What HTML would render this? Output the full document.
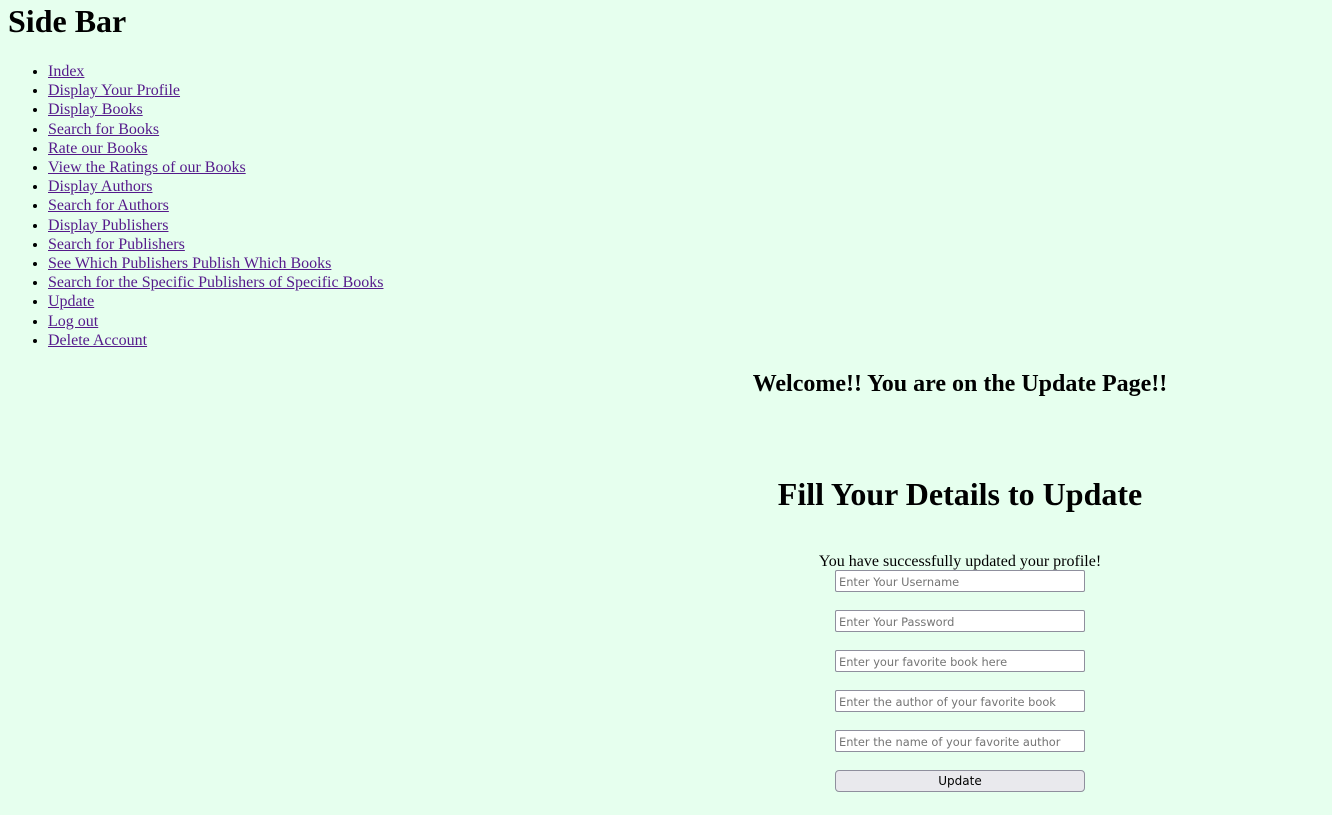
<!DOCTYPE html>
<html><head><style>
body{margin:0;background:#e6ffee;font-family:"Liberation Serif",serif;color:#000;width:1332px;height:815px;position:relative;overflow:hidden}
h1.sb{position:absolute;left:8px;top:3px;margin:0;font-size:32px;line-height:37px}
ul{position:absolute;left:8px;top:62px;margin:0;padding-left:40px;font-size:16px;line-height:19.2px}
a{color:#551a8b}
.c{position:absolute;left:660px;width:600px;text-align:center;margin:0}
.in{position:absolute;left:835px;width:250px;height:22px;box-sizing:border-box;border:1px solid #8f8f9d;border-radius:2px;background:#fff;font-family:"DejaVu Sans",sans-serif;font-size:11.4px;color:#757575;padding:3px 3px 1px;line-height:16px}
.btn{position:absolute;left:835px;top:770px;width:250px;height:22px;box-sizing:border-box;border:1px solid #8f8f9d;border-radius:4px;background:#e9e9ed;font-family:"DejaVu Sans",sans-serif;font-size:12px;text-align:center;line-height:21px}
</style></head><body>
<h1 class="sb">Side Bar</h1>
<ul>
<li><a href="#">Index</a></li>
<li><a href="#">Display Your Profile</a></li>
<li><a href="#">Display Books</a></li>
<li><a href="#">Search for Books</a></li>
<li><a href="#">Rate our Books</a></li>
<li><a href="#">View the Ratings of our Books</a></li>
<li><a href="#">Display Authors</a></li>
<li><a href="#">Search for Authors</a></li>
<li><a href="#">Display Publishers</a></li>
<li><a href="#">Search for Publishers</a></li>
<li><a href="#">See Which Publishers Publish Which Books</a></li>
<li><a href="#">Search for the Specific Publishers of Specific Books</a></li>
<li><a href="#">Update</a></li>
<li><a href="#">Log out</a></li>
<li><a href="#">Delete Account</a></li>
</ul>
<h2 class="c" style="top:370px;font-size:24px;line-height:28px">Welcome!! You are on the Update Page!!</h2>
<h1 class="c" style="top:476px;font-size:32px;line-height:37px">Fill Your Details to Update</h1>
<div class="c" style="top:552px;font-size:16px;line-height:19px">You have successfully updated your profile!</div>
<div class="in" style="top:570px">Enter Your Username</div>
<div class="in" style="top:610px">Enter Your Password</div>
<div class="in" style="top:650px">Enter your favorite book here</div>
<div class="in" style="top:690px">Enter the author of your favorite book</div>
<div class="in" style="top:730px">Enter the name of your favorite author</div>
<div class="btn">Update</div>
</body></html>
